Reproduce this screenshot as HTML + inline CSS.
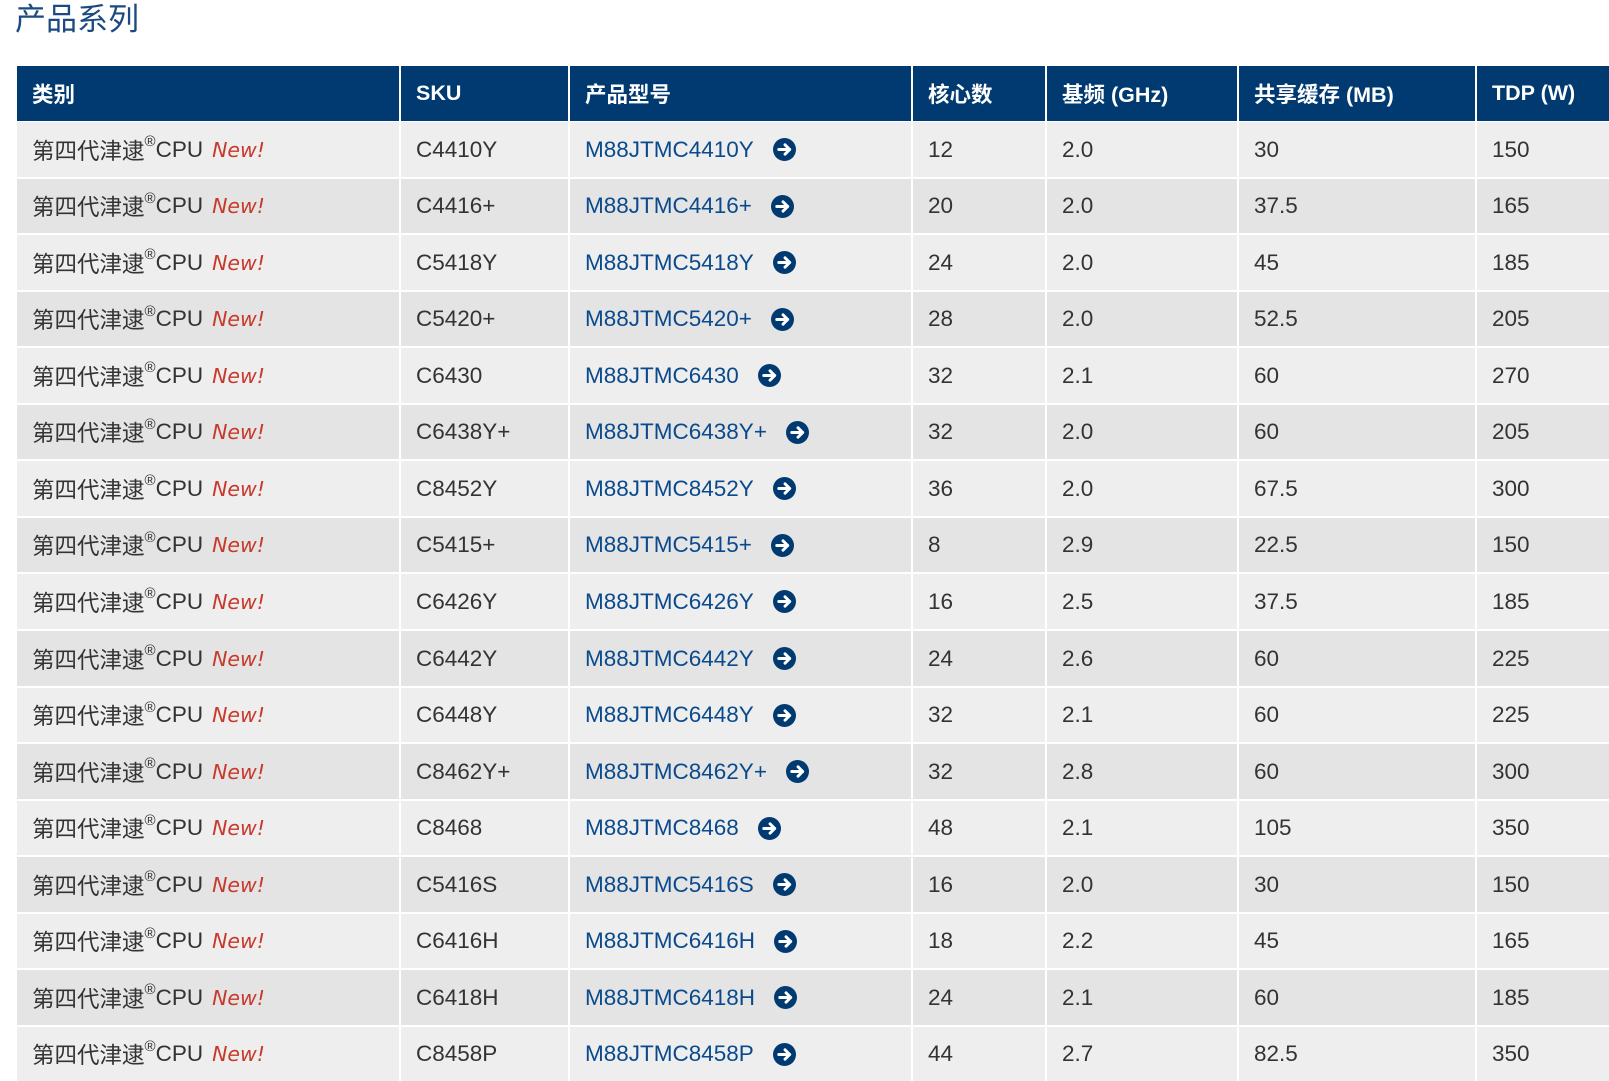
<!DOCTYPE html>
<html><head><meta charset="utf-8"><style>
*{margin:0;padding:0;box-sizing:border-box}
body{width:1609px;height:1075px;overflow:hidden;background:#fff;font-family:"Liberation Sans","Noto Sans CJK SC",sans-serif;color:#333;position:relative}
h1{position:absolute;left:15px;top:1px;font-weight:normal;font-size:31px;color:#1b4a82;line-height:37px}
.c{position:absolute;display:flex;align-items:center;padding-left:15px;font-size:22.5px;white-space:nowrap}
.h{background:#003a70;color:#fff;font-weight:bold;font-size:21.5px}
.n{color:#c8392b;font-style:italic;margin-left:9px;font-family:"DejaVu Sans",sans-serif;font-size:20.5px}
sup{font-size:15px;position:relative;top:-8px}
a{color:#0a4a8c;text-decoration:none}
.i{display:inline-block;width:23px;height:23px;border-radius:50%;background:#003a70;margin-left:19px;position:relative}
.i svg{position:absolute;left:0;top:0}
</style></head><body>
<h1>产品系列</h1>
<div id="t"></div>
<script>
var X=[17,401,570,913,1047,1239,1477,1614];
var H=["类别","SKU","产品型号","核心数","基频 (GHz)","共享缓存 (MB)","TDP (W)"];
var d=[["C4410Y",12,"2.0",30,150],["C4416+",20,"2.0","37.5",165],["C5418Y",24,"2.0",45,185],["C5420+",28,"2.0","52.5",205],["C6430",32,"2.1",60,270],["C6438Y+",32,"2.0",60,205],["C8452Y",36,"2.0","67.5",300],["C5415+",8,"2.9","22.5",150],["C6426Y",16,"2.5","37.5",185],["C6442Y",24,"2.6",60,225],["C6448Y",32,"2.1",60,225],["C8462Y+",32,"2.8",60,300],["C8468",48,"2.1",105,350],["C5416S",16,"2.0",30,150],["C6416H",18,"2.2",45,165],["C6418H",24,"2.1",60,185],["C8458P",44,"2.7","82.5",350]];
var ic='<span class="i"><svg width="23" height="23" viewBox="0 0 22 22"><path d="M5.5 11H16M11.5 6.5L16 11L11.5 15.5" stroke="#fff" stroke-width="2.8" fill="none" stroke-linecap="round" stroke-linejoin="round"/></svg></span>';
var h="";
function cell(x,w,y,hh,cls,bg,txt){return '<div class="c '+cls+'" style="left:'+x+'px;top:'+y+'px;width:'+w+'px;height:'+hh+'px;background:'+bg+'">'+txt+'</div>';}
for(var j=0;j<7;j++){h+=cell(X[j],X[j+1]-X[j]-2,66,55,"h","#003a70",H[j]);}
d.forEach(function(r,i){
  var y=Math.round(122+i*56.55), y2=Math.round(122+(i+1)*56.55)-2;
  var bg=i%2?"#e4e4e4":"#eeeeee";
  var v=['第四代津逮<sup>®</sup>CPU<span class="n">New!</span>',r[0],'<a>M88JTM'+r[0]+'</a>'+ic,r[1],r[2],r[3],r[4]];
  for(var j=0;j<7;j++){h+=cell(X[j],X[j+1]-X[j]-2,y,y2-y,"",bg,v[j]);}
});
document.getElementById("t").innerHTML=h;
</script>
</body></html>
